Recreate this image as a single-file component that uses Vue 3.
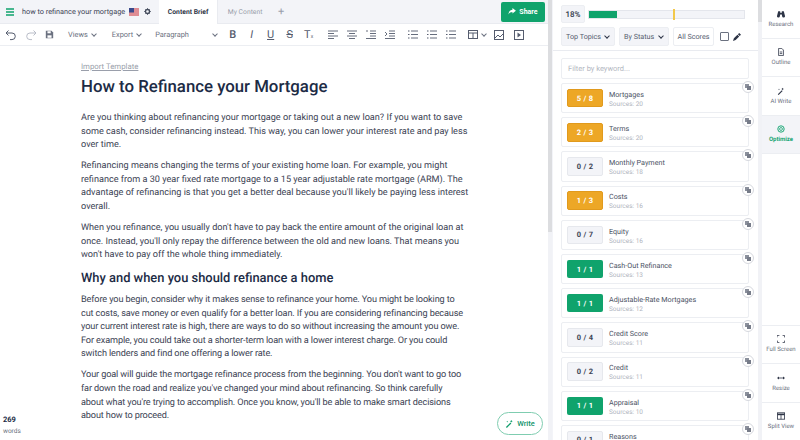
<template>
  <div class="app">
    <div class="left">
      <div class="tabbar">
        <svg class="menu" width="10" height="10" viewBox="0 0 10 10"><path d="M1 2h8M1 5h8M1 8h8" stroke="#10a36c" stroke-width="1.400" /></svg>
        <span class="keyword">how to refinance your mortgage</span>
        <svg class="flag" width="10" height="8" viewBox="0 0 10 8">
          <rect width="10" height="8" fill="#e8b4b8" />
          <path d="M0 1h10M0 3h10M0 5h10M0 7h10" stroke="#d0505e" stroke-width=".8" />
          <rect width="5" height="4.500" fill="#3b4a8c" />
        </svg>
        <svg class="gear" width="7" height="7" viewBox="0 0 8 8"><circle cx="4" cy="4" r="2.300" fill="none" stroke="#444b5c" stroke-width="1.500" /><path d="M4 .2v1M4 6.800v1M.2 4h1M6.800 4h1M1.300 1.300l.7.7M6 6l.7.7M1.300 6.700L2 6M6 2l.7-.7" stroke="#444b5c" stroke-width="1" /></svg>
        <div class="tab active">Content Brief</div>
        <div class="tab">My Content</div>
        <span class="plus">+</span>
        <button class="share">
          <svg width="8" height="7" viewBox="0 0 9 8"><path d="M5 0l4 3.200L5 6.400V4.500C3 4.500 1.500 5.200.5 7.500.5 4.500 2 2.200 5 2z" fill="#fff" /></svg>
          Share
        </button>
      </div>
      <div class="toolbar">
        <svg class="ic first" width="12" height="12" viewBox="0 0 12 12"><path d="M3.500 1.500L1 4l2.500 2.500M1 4h6a3.300 3.300 0 0 1 0 6.600H5" fill="none" stroke="#555c6e" stroke-width="1" /></svg>
        <svg class="ic" width="12" height="12" viewBox="0 0 12 12"><path d="M8.500 1.500L11 4 8.500 6.500M11 4H5a3.300 3.300 0 0 0 0 6.600h2" fill="none" stroke="#b9bdc8" stroke-width="1" /></svg>
        <svg class="ic" width="9" height="9" viewBox="0 0 11 11"><path d="M1 1h7l2 2v7H1z" fill="#6b7180" /><rect x="3" y="1.500" width="4" height="2.500" fill="#fff" /><rect x="3" y="6.500" width="5" height="3" fill="#fff" /></svg>
        <span class="drop views">Views <i class="chev"></i></span>
        <span class="drop export">Export <i class="chev"></i></span>
        <span class="drop para">Paragraph <i class="chev"></i></span>
        <span class="fmt b">B</span>
        <span class="fmt i">I</span>
        <span class="fmt u">U</span>
        <span class="fmt s">S</span>
        <span class="fmt t">T<small>x</small></span>
        <div class="group">
          <svg v-for="(d, n) in alignIcons" :key="n" width="10" height="9" viewBox="0 0 10 9"><path :d="d" stroke="#555c6e" stroke-width=".9" fill="none" /></svg>
        </div>
        <div class="group lists">
          <svg v-for="n in 3" :key="n" width="10" height="9" viewBox="0 0 10 9"><path d="M3 1h7M3 4.500h7M3 8h7" stroke="#555c6e" stroke-width=".9" /><path d="M0 1h1.500M0 4.500h1.500M0 8h1.500" stroke="#555c6e" /></svg>
        </div>
        <svg class="tbl" width="10" height="9" viewBox="0 0 10 9"><rect x=".5" y=".5" width="9" height="8" fill="none" stroke="#555c6e" /><path d="M.5 3h9M5 3v5.500" stroke="#555c6e" /></svg>
        <i class="chev tchev"></i>
        <svg class="media" width="10" height="10" viewBox="0 0 10 10"><rect x=".5" y=".5" width="9" height="9" fill="none" stroke="#555c6e" /><path d="M1 8l3-3 2 2 3-3" stroke="#555c6e" fill="none" /></svg>
        <svg class="media video" width="10" height="10" viewBox="0 0 10 10"><rect x=".5" y=".5" width="9" height="9" fill="none" stroke="#555c6e" /><path d="M3.500 2.500l3.500 2.500-3.500 2.500z" fill="#555c6e" /></svg>
      </div>
      <div class="doc">
        <a class="import">Import Template</a>
        <h1>How to Refinance your Mortgage</h1>
        <p>Are you thinking about refinancing your mortgage or taking out a new loan? If you want to save some cash, consider refinancing instead. This way, you can lower your interest rate and pay less over time.</p>
        <p>Refinancing means changing the terms of your existing home loan. For example, you might refinance from a 30 year fixed rate mortgage to a 15 year adjustable rate mortgage (ARM). The advantage of refinancing is that you get a better deal because you'll likely be paying less interest overall.</p>
        <p>When you refinance, you usually don't have to pay back the entire amount of the original loan at once. Instead, you'll only repay the difference between the old and new loans. That means you won't have to pay off the whole thing immediately.</p>
        <h2>Why and when you should refinance a home</h2>
        <p class="tight">Before you begin, consider why it makes sense to refinance your home. You might be looking to<br />cut costs, save money or even qualify for a better loan. If you are considering refinancing because<br />your current interest rate is high, there are ways to do so without increasing the amount you owe.<br />For example, you could take out a shorter-term loan with a lower interest charge. Or you could<br />switch lenders and find one offering a lower rate.</p>
        <p class="tight">Your goal will guide the mortgage refinance process from the beginning. You don't want to go too<br />far down the road and realize you've changed your mind about refinancing. So think carefully<br />about what you're trying to accomplish. Once you know, you'll be able to make smart decisions<br />about how to proceed.</p>
      </div>
      <div class="count"><b>269</b><span>words</span></div>
      <button class="write">
        <svg width="9" height="9" viewBox="0 0 10 10"><path d="M1 9l5-5 1 1-5 5z" fill="#0f9d6b" /><path d="M7 1l.5 1 1 .5-1 .5L7 4l-.5-1-1-.5 1-.5zM2.500 2l.3.7.7.3-.7.3-.3.7-.3-.7-.7-.3.7-.3z" fill="#0f9d6b" /></svg>
        Write
      </button>
      <div class="scroll"><div class="thumb"></div></div>
    </div>

    <div class="panel">
      <div class="panel-main">
        <div class="panel-top">
          <div class="score-row">
            <span class="pct">18%</span>
            <div class="bar"><div class="fill" :style="{ width: '18%' }"></div><i class="mark"></i></div>
          </div>
          <div class="filters">
            <span class="select first-sel">Top Topics <i class="chev dark"></i></span>
            <span class="select second-sel">By Status <i class="chev dark"></i></span>
            <span class="select plain">All Scores</span>
            <span class="check"></span>
            <svg width="8" height="8" viewBox="0 0 9 9"><path d="M0 9l1-3 4-4 2 2-4 4zM5.500 1.500L7 0l2 2-1.500 1.500z" fill="#2d3446" /></svg>
          </div>
        </div>
        <div class="topics">
          <div class="filter-input">Filter by keyword...</div>
          <div v-for="t in topics" :key="t.name" class="card">
            <span class="badge" :class="t.kind">{{ t.score }}</span>
            <div class="topic-text">
              <div class="name">{{ t.name }}</div>
              <div class="src">Sources: {{ t.sources }}</div>
            </div>
            <span class="copy">
              <svg width="6" height="6" viewBox="0 0 6 6"><rect x="0" y="0" width="4" height="4" fill="#8b909c" /><rect x="2" y="2" width="4" height="4" fill="#777c89" /></svg>
            </span>
          </div>
        </div>
      </div>
      <div class="scroll panel-scroll"><div class="thumb"></div></div>
    </div>

    <div class="rail">
      <div class="rail-top">
        <div v-for="r in railTop" :key="r.label" class="rail-item" :class="{ on: r.on }">
          <svg width="8" height="8" viewBox="0 0 10 10" v-html="r.icon"></svg>
          <span>{{ r.label }}</span>
        </div>
      </div>
      <div class="rail-bottom">
        <div v-for="r in railBottom" :key="r.label" class="rail-item">
          <svg width="8" height="8" viewBox="0 0 10 10" v-html="r.icon"></svg>
          <span>{{ r.label }}</span>
        </div>
      </div>
    </div>
  </div>
</template>

<script setup>
const alignIcons = [
  "M0 1h10M0 3.500h6M0 6h10M0 8.500h6",
  "M0 1h10M2 3.500h6M0 6h10M2 8.500h6",
  "M4 1h6M4 3.500h6M4 6h6M0 8.500h10M0 1h2",
  "M4 1h6M4 3.500h6M4 6h6M0 8.500h10M0 2l2 2-2 2",
];

const topics = [
  { score: "5 / 8", name: "Mortgages", sources: 20, kind: "orange" },
  { score: "2 / 3", name: "Terms", sources: 20, kind: "orange" },
  { score: "0 / 2", name: "Monthly Payment", sources: 18, kind: "empty" },
  { score: "1 / 3", name: "Costs", sources: 16, kind: "orange" },
  { score: "0 / 7", name: "Equity", sources: 16, kind: "empty" },
  { score: "1 / 1", name: "Cash-Out Refinance", sources: 13, kind: "green" },
  { score: "1 / 1", name: "Adjustable-Rate Mortgages", sources: 12, kind: "green" },
  { score: "0 / 4", name: "Credit Score", sources: 11, kind: "empty" },
  { score: "0 / 2", name: "Credit", sources: 11, kind: "empty" },
  { score: "1 / 1", name: "Appraisal", sources: 10, kind: "green" },
  { score: "0 / 1", name: "Reasons", sources: 10, kind: "empty" },
];

const railTop = [
  { label: "Research", icon: '<path d="M1.500 1.500h2.500v2h2v-2h2.500L10 7.500a1.800 1.800 0 0 1-3.600.4L6 5.500H4L3.600 7.900A1.800 1.800 0 0 1 0 7.500z" fill="#2d3446"/>' },
  { label: "Outline", icon: '<path d="M2 .5h4l2 2v7H2z" fill="none" stroke="#2d3446"/><path d="M3.500 5h3M3.500 7h3" stroke="#2d3446"/>' },
  { label: "AI Write", icon: '<path d="M1 9l5-5 1 1-5 5z" fill="#2d3446"/><path d="M7 1l.5 1 1 .5-1 .5L7 4l-.5-1-1-.5 1-.5zM2.500 2l.3.7.7.3-.7.3-.3.7-.3-.7-.7-.3.7-.3z" fill="#2d3446"/>' },
  { label: "Optimize", on: true, icon: '<circle cx="5" cy="5" r="4" fill="none" stroke="#17a573" stroke-width="1.200"/><circle cx="5" cy="5" r="1.800" fill="none" stroke="#17a573"/>' },
];

const railBottom = [
  { label: "Full Screen", icon: '<path d="M0 3V.5h3M7 .5h2.500V3M9.500 7v2.500H7M3 9.500H.5V7" fill="none" stroke="#2d3446"/>' },
  { label: "Resize", icon: '<path d="M0 5l2.500-2v4zM10 5L7.500 3v4z" fill="#2d3446"/><path d="M2 5h6" stroke="#2d3446"/>' },
  { label: "Split View", icon: '<rect x=".5" y="1" width="9" height="8" fill="none" stroke="#2d3446"/><path d="M.5 3h9" stroke="#2d3446" stroke-width="2"/><path d="M5 3v6" stroke="#2d3446"/>' },
];
</script>

<style>
html,
body {
  margin: 0;
  overflow: hidden;
}
</style>

<style scoped>
.app {
  position: relative;
  display: flex;
  width: 800px;
  height: 440px;
  overflow: hidden;
  background: #fff;
  font-family: Roboto, "Liberation Sans", sans-serif;
  color: #2d3446;
  text-rendering: geometricPrecision;
}

.left {
  position: relative;
  width: 552px;
  height: 440px;
  flex: none;
}

.scroll {
  position: absolute;
  top: 0;
  right: 0;
  width: 4px;
  height: 440px;
  background: #f1f2f6;
}

.thumb {
  height: 232px;
  background: #dcdde0;
}

.panel-scroll {
  position: static;
  flex: none;
}

.panel-scroll .thumb {
  height: 22px;
}

.tabbar {
  display: flex;
  align-items: center;
  height: 24px;
  box-sizing: border-box;
  background: #f3f4f8;
  border-bottom: 1px solid #e9ebf0;
}

.menu {
  margin-left: 5px;
}

.keyword {
  margin-left: 7px;
  font-size: 7.300px;
  color: #3c4354;
  white-space: nowrap;
}

.flag {
  margin-left: 4px;
}

.gear {
  margin-left: 5px;
}

.tab {
  display: flex;
  align-items: center;
  justify-content: center;
  width: 54px;
  height: 24px;
  font-size: 6.800px;
  color: #9a9fab;
}

.tab.active {
  margin-left: 8px;
  width: 59px;
  box-sizing: border-box;
  background: #fff;
  color: #2d3446;
  font-weight: 700;
  border-right: 1px solid #e9ebf0;
}

.plus {
  margin-left: 6px;
  font-size: 11px;
  color: #9a9fab;
}

.share {
  display: flex;
  align-items: center;
  justify-content: center;
  gap: 3px;
  width: 44px;
  height: 20px;
  margin-left: auto;
  margin-right: 7px;
  padding: 0;
  border: none;
  border-radius: 2px;
  background: #10a36c;
  color: #fff;
  font: 700 7px Roboto, sans-serif;
}

.toolbar {
  display: flex;
  align-items: center;
  height: 22px;
  box-sizing: border-box;
  border-bottom: 1px solid #eceef2;
  font-size: 7.400px;
  color: #6b7180;
}

.ic {
  margin-left: 8px;
}

.ic.first {
  margin-left: 5px;
}

.drop {
  display: flex;
  align-items: center;
  gap: 4px;
  white-space: nowrap;
}

.views {
  margin-left: 14px;
}

.export {
  margin-left: 16px;
}

.para {
  justify-content: space-between;
  width: 62px;
  margin-left: 14px;
}

.chev {
  display: inline-block;
  width: 3px;
  height: 3px;
  border-right: 1px solid #6b7180;
  border-bottom: 1px solid #6b7180;
  transform: translateY(-1px) rotate(45deg);
}

.chev.dark {
  border-color: #2d3446;
  border-width: 1.200px;
}

.fmt {
  width: 11px;
  margin-left: 8px;
  text-align: center;
  font-size: 11px;
  color: #555c6e;
}

.fmt.b {
  margin-left: 10px;
  font-weight: 500;
}

.fmt.i {
  font-style: italic;
}

.fmt.u {
  text-decoration: underline;
}

.fmt.s {
  text-decoration: line-through;
}

.fmt.t small {
  font-size: 5px;
}

.group {
  display: flex;
  gap: 9px;
  margin-left: 14px;
}

.group.lists {
  margin-left: 13px;
}

.tbl {
  margin-left: 12px;
}

.tchev {
  margin-left: 4px;
}

.media {
  margin-left: 8px;
}

.media.video {
  margin-left: 10px;
}

.doc {
  width: 389px;
  margin-left: 81px;
  padding-top: 14.500px;
}

.import {
  display: block;
  font-size: 7.800px;
  line-height: 11px;
  color: #9a9fab;
  text-decoration: underline;
}

h1 {
  margin: 3.500px 0 13px;
  font-size: 16.800px;
  line-height: 24px;
  font-weight: 500;
  color: #1c2b45;
}

h2 {
  margin: 0 0 6px;
  font-size: 12.900px;
  line-height: 18px;
  font-weight: 500;
  color: #1c2b45;
}

p {
  margin: 0 0 7.400px;
  font-size: 9.130px;
  line-height: 13.600px;
  color: #3c4354;
}

p.tight {
  white-space: nowrap;
  letter-spacing: -0.12px;
}

.count {
  position: absolute;
  left: 3px;
  top: 414px;
  display: flex;
  flex-direction: column;
  font-size: 6.500px;
  line-height: 11.500px;
  color: #6b7180;
}

.count b {
  font-size: 7.500px;
  color: #1c2b45;
}

.write {
  position: absolute;
  left: 497px;
  top: 412px;
  display: flex;
  align-items: center;
  justify-content: center;
  gap: 3px;
  width: 46px;
  height: 23px;
  padding: 0;
  border: 1px solid #7fcdb0;
  border-radius: 12px;
  background: #fff;
  color: #10936a;
  font: 500 7.500px Roboto, sans-serif;
}

.panel {
  display: flex;
  width: 210px;
  height: 440px;
  flex: none;
  padding-left: 1px;
  box-sizing: border-box;
  background: #f3f4f8;
}

.panel-main {
  display: flex;
  flex-direction: column;
  width: 205px;
  flex: none;
}

.panel-top {
  height: 51px;
  padding: 5px 0 0 8px;
  box-sizing: border-box;
  background: #fff;
  border-bottom: 1px solid #e9ebf0;
  flex: none;
}

.score-row {
  display: flex;
  align-items: center;
  gap: 3px;
}

.pct {
  display: flex;
  align-items: center;
  justify-content: center;
  width: 24px;
  height: 18px;
  border-radius: 2px;
  background: #f3f4f8;
  border: 1px solid #eceef2;
  box-sizing: border-box;
  font-size: 8px;
  font-weight: 500;
}

.bar {
  position: relative;
  width: 157px;
  height: 9px;
  box-sizing: border-box;
  background: #f3f4f8;
  border: 1px solid #e4e6ec;
}

.fill {
  height: 100%;
  background: #10a36c;
}

.mark {
  position: absolute;
  left: 84px;
  top: -2px;
  width: 1.500px;
  height: 11px;
  background: #f2c84b;
}

.filters {
  display: flex;
  align-items: center;
  margin-top: 4px;
}

.select {
  display: flex;
  align-items: center;
  justify-content: space-between;
  height: 19px;
  box-sizing: border-box;
  padding: 0 5px 0 4px;
  border: 1px solid #eceef2;
  border-radius: 2px;
  background: #f3f4f8;
  font-size: 7.200px;
  color: #555c6e;
  white-space: nowrap;
}

.first-sel {
  width: 54px;
}

.second-sel {
  width: 50px;
  margin-left: 4px;
}

.plain {
  width: 41px;
  margin-left: 4px;
  background: #fff;
  justify-content: center;
  padding: 0;
}

.check {
  width: 7px;
  height: 7px;
  margin: 0 4px 0 6px;
  border: 1px solid #6b7180;
  border-radius: 1px;
}

.topics {
  padding: 7px 0 0 8px;
  box-sizing: border-box;
  background: #fff;
  flex: 1;
}

.filter-input {
  display: flex;
  align-items: center;
  width: 188px;
  height: 21px;
  padding-left: 6px;
  box-sizing: border-box;
  border: 1px solid #eceef2;
  border-radius: 2px;
  font-size: 7.500px;
  color: #b4b8c2;
}

.card {
  position: relative;
  display: flex;
  align-items: center;
  width: 188px;
  height: 30.200px;
  margin-top: 4px;
  padding-left: 5px;
  box-sizing: border-box;
  border: 1px solid #eceef2;
  border-radius: 2px;
}

.badge {
  display: flex;
  align-items: center;
  justify-content: center;
  width: 36px;
  height: 18.500px;
  box-sizing: border-box;
  border-radius: 2px;
  font-size: 7.500px;
  font-weight: 700;
  letter-spacing: 0.3px;
}

.badge.orange {
  background: #eda726;
  border: 1px solid #e19a1d;
  color: #fff;
}

.badge.green {
  background: #10a36c;
  color: #fff;
}

.badge.empty {
  background: #f3f4f8;
  border: 1px solid #e6e8ed;
  color: #3c4354;
}

.topic-text {
  margin-left: 6px;
  padding-top: 3px;
}

.name {
  font-size: 7.200px;
  line-height: 10px;
  color: #4a5163;
}

.src {
  font-size: 6.500px;
  line-height: 9.500px;
  color: #b0b4be;
}

.copy {
  position: absolute;
  right: -6px;
  top: -3px;
  display: flex;
  align-items: center;
  justify-content: center;
  width: 10px;
  height: 10px;
  border: 1px solid #d6d8de;
  border-radius: 50%;
  background: #fff;
}

.rail {
  display: flex;
  flex-direction: column;
  justify-content: space-between;
  flex: 1;
  background: #fff;
}

.rail-item {
  display: flex;
  flex-direction: column;
  align-items: center;
  justify-content: center;
  gap: 3px;
  height: 38.500px;
  box-sizing: border-box;
  border-bottom: 1px solid #eceef2;
  font-size: 6px;
  color: #6b7180;
}

.rail-bottom .rail-item {
  border-bottom: none;
  border-top: 1px solid #eceef2;
}

.rail-item.on {
  background: #f3f4f8;
  color: #17a573;
  font-weight: 700;
}
</style>
